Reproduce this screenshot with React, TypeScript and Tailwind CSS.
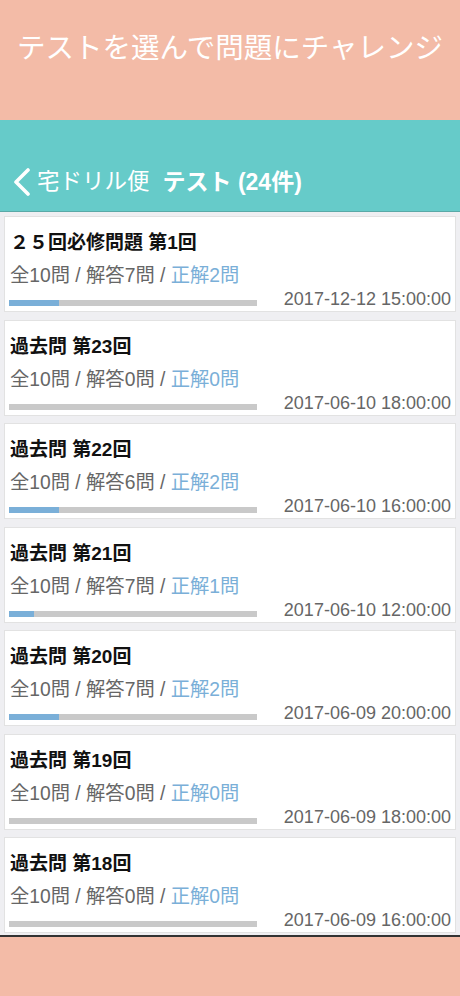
import React from 'react';

type TestItem = {
  title: string;
  total: number;
  answered: number;
  correct: number;
  date: string;
};

const TESTS: TestItem[] = [
  { title: '２５回必修問題 第1回', total: 10, answered: 7, correct: 2, date: '2017-12-12 15:00:00' },
  { title: '過去問 第23回', total: 10, answered: 0, correct: 0, date: '2017-06-10 18:00:00' },
  { title: '過去問 第22回', total: 10, answered: 6, correct: 2, date: '2017-06-10 16:00:00' },
  { title: '過去問 第21回', total: 10, answered: 7, correct: 1, date: '2017-06-10 12:00:00' },
  { title: '過去問 第20回', total: 10, answered: 7, correct: 2, date: '2017-06-09 20:00:00' },
  { title: '過去問 第19回', total: 10, answered: 0, correct: 0, date: '2017-06-09 18:00:00' },
  { title: '過去問 第18回', total: 10, answered: 0, correct: 0, date: '2017-06-09 16:00:00' },
];

const TestCard: React.FC<{ item: TestItem }> = ({ item }) => {
  const pct = (item.correct / item.total) * 100;
  return (
    <div className="h-[96px] bg-white border border-[#e2e2e2] px-[4px] pt-[15px] flex flex-col">
      <div className="text-[19px] leading-[22px] font-bold text-[#111] pl-[1px]">{item.title}</div>
      <div className="mt-[11px] text-[19.3px] leading-[22px] text-[#666] pl-[1px]">
        全{item.total}問 / 解答{item.answered}問 / <span className="text-[#7aafd8]">正解{item.correct}問</span>
      </div>
      <div className="mt-[2px] h-[20px] flex items-end justify-between">
        <div className="w-[248px] h-[6px] mb-[3px] bg-[#c9c9c9]">
          <div className="h-full bg-[#7aafd8]" style={{ width: `${pct}%` }} />
        </div>
        <div className="text-[18px] leading-[20px] text-[#666]">{item.date}</div>
      </div>
    </div>
  );
};

export default function App() {
  return (
    <div
      className="w-[460px] h-[996px] flex flex-col overflow-hidden"
      style={{ fontFamily: '"Liberation Sans", "Noto Sans CJK JP", sans-serif' }}
    >
      {/* Banner */}
      <div className="h-[120px] bg-[#f3bba7] pt-[30px] flex justify-center">
        <div className="text-[28.5px] leading-[36px] text-white">テストを選んで問題にチャレンジ</div>
      </div>

      {/* Nav bar */}
      <div className="h-[92px] bg-[#66cbc9] border-b border-[#5aa9a7] flex flex-col justify-end pb-[7px]">
        <div className="h-[44px] flex items-center pl-[12px] text-white">
          <svg width="20" height="28" viewBox="0 0 20 28" fill="none">
            <path d="M16 2 L4 14 L16 26" stroke="white" strokeWidth="3.6" strokeLinecap="round" strokeLinejoin="round" />
          </svg>
          <span className="ml-[5px] text-[22.5px] leading-[26px]">宅ドリル便</span>
          <span className="ml-[13px] text-[23px] leading-[26px] font-bold">テスト (24件)</span>
        </div>
      </div>

      {/* List */}
      <div className="h-[723px] bg-[#efeff2] px-[4px] pt-[4px] flex flex-col gap-[7.5px]">
        {TESTS.map((item) => (
          <TestCard key={item.title} item={item} />
        ))}
      </div>

      {/* Footer */}
      <div className="flex-1 bg-[#f3bba7] border-t-2 border-[#333]" />
    </div>
  );
}
